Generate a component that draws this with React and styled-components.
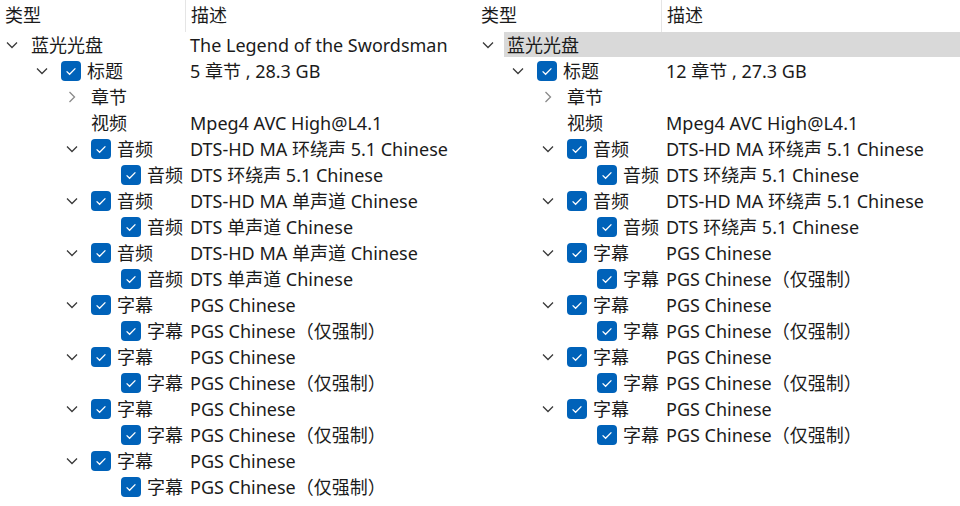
import React from 'react';
import styled, { createGlobalStyle } from 'styled-components';

const GlobalStyle = createGlobalStyle`
  html, body {
    margin: 0;
    padding: 0;
    background: #ffffff;
  }
  body {
    font-family: "Noto Sans", "Noto Sans CJK SC", sans-serif;
    font-size: 18px;
    color: #1b1b1b;
  }
`;

const subtitles = (n) =>
  Array.from({ length: n }).flatMap(() => [
    { level: 2, expand: 'open', check: true, name: '字幕', desc: 'PGS Chinese' },
    { level: 3, check: true, name: '字幕', desc: 'PGS Chinese（仅强制）' },
  ]);

const leftRows = [
  { level: 0, expand: 'open', name: '蓝光光盘', desc: 'The Legend of the Swordsman' },
  { level: 1, expand: 'open', check: true, name: '标题', desc: '5 章节 , 28.3 GB' },
  { level: 2, expand: 'closed', name: '章节', desc: '' },
  { level: 2, name: '视频', desc: 'Mpeg4 AVC High@L4.1' },
  { level: 2, expand: 'open', check: true, name: '音频', desc: 'DTS-HD MA 环绕声 5.1 Chinese' },
  { level: 3, check: true, name: '音频', desc: 'DTS 环绕声 5.1 Chinese' },
  { level: 2, expand: 'open', check: true, name: '音频', desc: 'DTS-HD MA 单声道 Chinese' },
  { level: 3, check: true, name: '音频', desc: 'DTS 单声道 Chinese' },
  { level: 2, expand: 'open', check: true, name: '音频', desc: 'DTS-HD MA 单声道 Chinese' },
  { level: 3, check: true, name: '音频', desc: 'DTS 单声道 Chinese' },
  ...subtitles(4),
];

const rightRows = [
  { level: 0, expand: 'open', name: '蓝光光盘', desc: '', selected: true },
  { level: 1, expand: 'open', check: true, name: '标题', desc: '12 章节 , 27.3 GB' },
  { level: 2, expand: 'closed', name: '章节', desc: '' },
  { level: 2, name: '视频', desc: 'Mpeg4 AVC High@L4.1' },
  { level: 2, expand: 'open', check: true, name: '音频', desc: 'DTS-HD MA 环绕声 5.1 Chinese' },
  { level: 3, check: true, name: '音频', desc: 'DTS 环绕声 5.1 Chinese' },
  { level: 2, expand: 'open', check: true, name: '音频', desc: 'DTS-HD MA 环绕声 5.1 Chinese' },
  { level: 3, check: true, name: '音频', desc: 'DTS 环绕声 5.1 Chinese' },
  ...subtitles(4),
];

const Chevron = ({ open }) =>
  open ? (
    <svg width="12" height="8" viewBox="0 0 12 8">
      <path d="M1 1.5 L6 6.5 L11 1.5" fill="none" stroke="#3a3a3a" strokeWidth="1.3" />
    </svg>
  ) : (
    <svg width="8" height="12" viewBox="0 0 8 12">
      <path d="M1.5 1 L6.5 6 L1.5 11" fill="none" stroke="#8a8a8a" strokeWidth="1.3" />
    </svg>
  );

const CheckBox = () => (
  <Box>
    <svg width="20" height="20" viewBox="0 0 20 20">
      <path d="M5.6 10.4 L8.6 13.3 L14.4 7.4" fill="none" stroke="#ffffff" strokeWidth="1.3" />
    </svg>
  </Box>
);

const TreeView = ({ rows }) => (
  <Tree>
    <Header>
      <HeadCell $divider>类型</HeadCell>
      <HeadCell>描述</HeadCell>
    </Header>
    {rows.map((row, i) => (
      <Row key={i}>
        <Toggle $level={row.level}>{row.expand && <Chevron open={row.expand === 'open'} />}</Toggle>
        <Body $selected={row.selected}>
          <Name $level={row.level}>
            {row.check && <CheckBox />}
            <span>{row.name}</span>
          </Name>
          <Desc>{row.desc}</Desc>
        </Body>
      </Row>
    ))}
  </Tree>
);

const App = () => {
  return (
    <>
      <GlobalStyle />
      <Page>
        <Panel $width={476}>
          <TreeView rows={leftRows} />
        </Panel>
        <Panel $width={484}>
          <TreeView rows={rightRows} />
        </Panel>
      </Page>
    </>
  );
};

//Styling
const Page = styled.div`
  display: flex;
  width: 960px;
  height: 506px;
  overflow: hidden;
`;

const Panel = styled.div`
  width: ${(p) => p.$width}px;
  flex-shrink: 0;
`;

const Tree = styled.div`
  display: flex;
  flex-direction: column;
`;

const Header = styled.div`
  display: grid;
  grid-template-columns: 186px 1fr;
  height: 32px;
`;

const HeadCell = styled.div`
  display: flex;
  align-items: center;
  padding: 0 0 2px 5px;
  border-right: ${(p) => (p.$divider ? '1px solid #e5e5e5' : 'none')};
  line-height: 1;
`;

const Row = styled.div`
  display: flex;
  height: 26px;
  align-items: stretch;
`;

const Toggle = styled.div`
  width: 24px;
  margin-left: ${(p) => p.$level * 30}px;
  margin-right: 4px;
  display: flex;
  align-items: center;
  justify-content: center;
  flex-shrink: 0;
`;

const Body = styled.div`
  flex: 1;
  display: flex;
  align-items: center;
  padding-left: 3px;
  height: 25px;
  background: ${(p) => (p.$selected ? '#d9d9d9' : 'transparent')};
  white-space: nowrap;
  line-height: 1;
`;

const Name = styled.div`
  width: ${(p) => 159 - p.$level * 30}px;
  flex-shrink: 0;
  display: flex;
  align-items: center;
  gap: 6px;
`;

const Desc = styled.div`
  flex: 1;
`;

const Box = styled.div`
  width: 20px;
  height: 20px;
  border-radius: 4px;
  background: #0062b9;
  display: flex;
  flex-shrink: 0;
`;

export default App;
